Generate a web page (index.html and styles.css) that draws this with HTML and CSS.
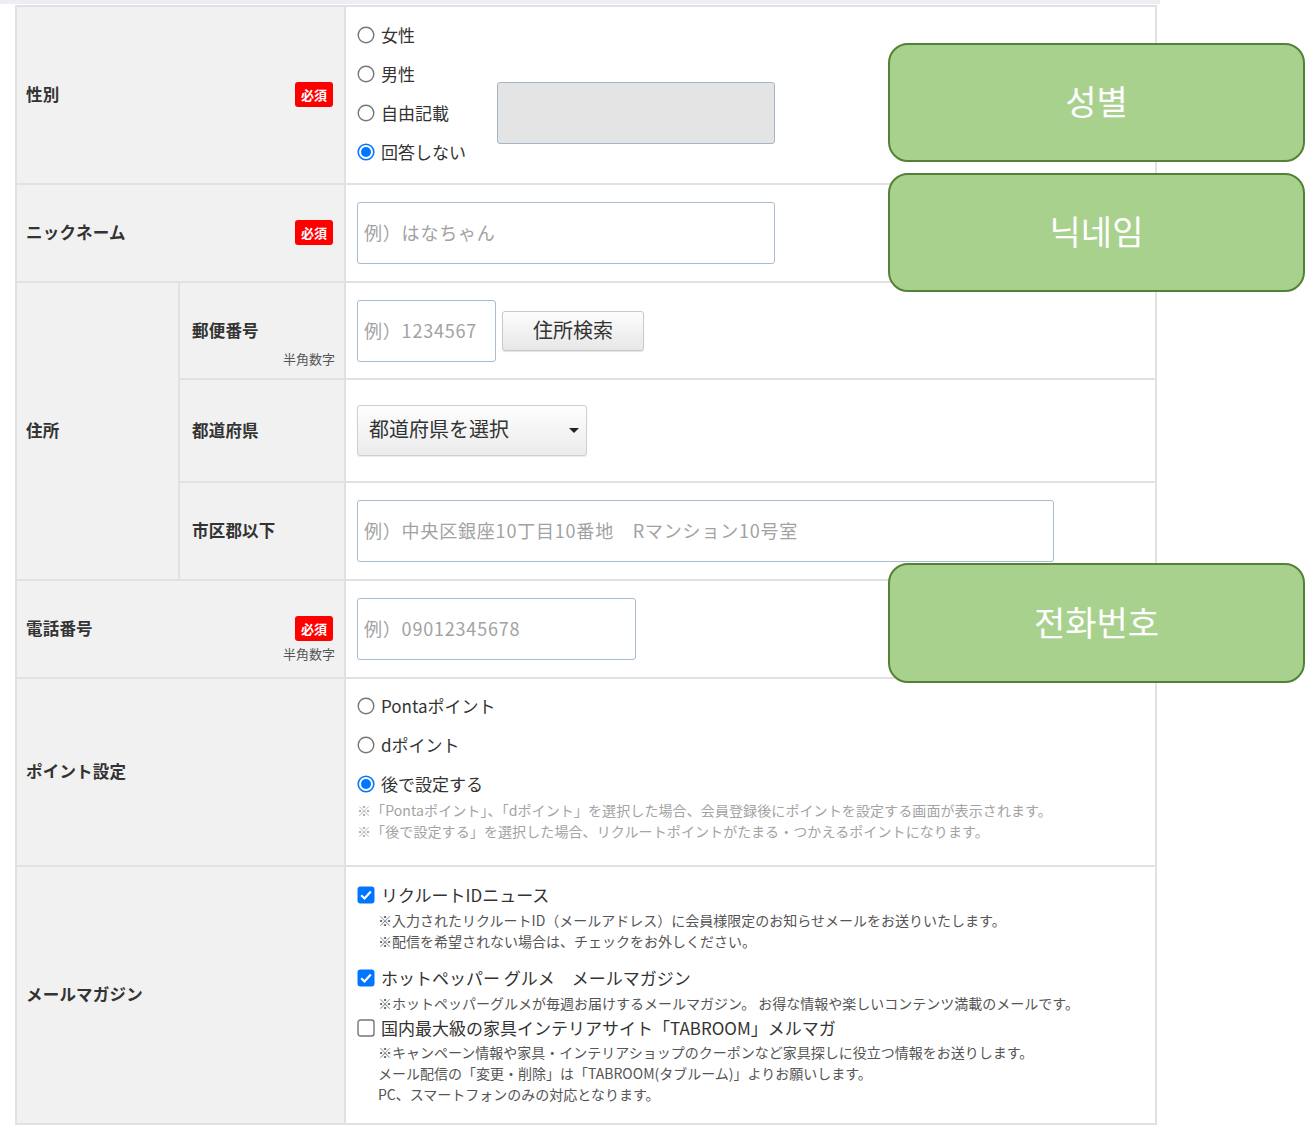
FILE: index.html
```html
<!DOCTYPE html>
<html lang="ja">
<head>
<meta charset="utf-8">
<title>会員登録</title>
<link rel="stylesheet" href="styles.css">
</head>
<body>
<div class="page">
  <div class="topbar"></div>
  <div class="form">
    <!-- 性別 -->
    <div class="cell lbl span2">
      <span class="lbl-text">性別</span><span class="badge">必須</span>
    </div>
    <div class="cell val val-gender">
      <div class="radios">
        <label class="opt"><svg class="ico" viewBox="0 0 18 18" width="18" height="18"><circle cx="9" cy="9" r="7.8" fill="#fff" stroke="#767676" stroke-width="1.4"/></svg><span>女性</span></label>
        <label class="opt"><svg class="ico" viewBox="0 0 18 18" width="18" height="18"><circle cx="9" cy="9" r="7.8" fill="#fff" stroke="#767676" stroke-width="1.4"/></svg><span>男性</span></label>
        <label class="opt"><svg class="ico" viewBox="0 0 18 18" width="18" height="18"><circle cx="9" cy="9" r="7.8" fill="#fff" stroke="#767676" stroke-width="1.4"/></svg><span>自由記載</span></label>
        <label class="opt"><svg class="ico" viewBox="0 0 18 18" width="18" height="18"><circle cx="9" cy="9" r="7.8" fill="#fff" stroke="#0075ff" stroke-width="1.6"/><circle cx="9" cy="9" r="5" fill="#0075ff"/></svg><span>回答しない</span></label>
      </div>
      <input class="txt free" type="text" disabled>
    </div>

    <!-- ニックネーム -->
    <div class="cell lbl span2">
      <span class="lbl-text">ニックネーム</span><span class="badge">必須</span>
    </div>
    <div class="cell val">
      <input class="txt w-nick" type="text" placeholder="例）はなちゃん">
    </div>

    <!-- 住所 -->
    <div class="cell lbl rowspan3">
      <span class="lbl-text">住所</span>
    </div>
    <div class="cell lbl sub">
      <span class="lbl-text">郵便番号</span><span class="hint hint-zip">半角数字</span>
    </div>
    <div class="cell val">
      <input class="txt w-zip" type="text" placeholder="例）1234567">
      <button class="btn" type="button">住所検索</button>
    </div>
    <div class="cell lbl sub">
      <span class="lbl-text">都道府県</span>
    </div>
    <div class="cell val">
      <div class="sel"><span>都道府県を選択</span><span class="caret"></span></div>
    </div>
    <div class="cell lbl sub">
      <span class="lbl-text">市区郡以下</span>
    </div>
    <div class="cell val">
      <input class="txt w-addr" type="text" placeholder="例）中央区銀座10丁目10番地　Rマンション10号室">
    </div>

    <!-- 電話番号 -->
    <div class="cell lbl span2">
      <span class="lbl-text">電話番号</span><span class="badge">必須</span><span class="hint hint-tel">半角数字</span>
    </div>
    <div class="cell val">
      <input class="txt w-tel" type="text" placeholder="例）09012345678">
    </div>

    <!-- ポイント設定 -->
    <div class="cell lbl span2">
      <span class="lbl-text">ポイント設定</span>
    </div>
    <div class="cell val val-col val-point">
      <div class="radios">
        <label class="opt"><svg class="ico" viewBox="0 0 18 18" width="18" height="18"><circle cx="9" cy="9" r="7.8" fill="#fff" stroke="#767676" stroke-width="1.4"/></svg><span>Pontaポイント</span></label>
        <label class="opt"><svg class="ico" viewBox="0 0 18 18" width="18" height="18"><circle cx="9" cy="9" r="7.8" fill="#fff" stroke="#767676" stroke-width="1.4"/></svg><span>dポイント</span></label>
        <label class="opt"><svg class="ico" viewBox="0 0 18 18" width="18" height="18"><circle cx="9" cy="9" r="7.8" fill="#fff" stroke="#0075ff" stroke-width="1.6"/><circle cx="9" cy="9" r="5" fill="#0075ff"/></svg><span>後で設定する</span></label>
      </div>
      <div class="pnotes">
        <p>※「Pontaポイント」、「dポイント」を選択した場合、会員登録後にポイントを設定する画面が表示されます。</p>
        <p>※「後で設定する」を選択した場合、リクルートポイントがたまる・つかえるポイントになります。</p>
      </div>
    </div>

    <!-- メールマガジン -->
    <div class="cell lbl span2">
      <span class="lbl-text">メールマガジン</span>
    </div>
    <div class="cell val val-col val-mail">
      <div class="mitem m1">
        <label class="opt"><svg class="ico" viewBox="0 0 18 18" width="18" height="18"><rect x="0.5" y="0.5" width="17" height="17" rx="3" fill="#0075ff"/><path d="M4.2 9.2 L7.5 12.5 L13.8 5.4" fill="none" stroke="#fff" stroke-width="2.2"/></svg><span>リクルートIDニュース</span></label>
        <div class="mnotes">
          <p>※入力されたリクルートID（メールアドレス）に会員様限定のお知らせメールをお送りいたします。</p>
          <p>※配信を希望されない場合は、チェックをお外しください。</p>
        </div>
      </div>
      <div class="mitem m2">
        <label class="opt"><svg class="ico" viewBox="0 0 18 18" width="18" height="18"><rect x="0.5" y="0.5" width="17" height="17" rx="3" fill="#0075ff"/><path d="M4.2 9.2 L7.5 12.5 L13.8 5.4" fill="none" stroke="#fff" stroke-width="2.2"/></svg><span>ホットペッパー グルメ　メールマガジン</span></label>
        <div class="mnotes">
          <p>※ホットペッパーグルメが毎週お届けするメールマガジン。 お得な情報や楽しいコンテンツ満載のメールです。</p>
        </div>
      </div>
      <div class="mitem m3">
        <label class="opt"><svg class="ico" viewBox="0 0 18 18" width="18" height="18"><rect x="1" y="1" width="16" height="16" rx="2.5" fill="#fff" stroke="#767676" stroke-width="1.4"/></svg><span>国内最大級の家具インテリアサイト「TABROOM」メルマガ</span></label>
        <div class="mnotes">
          <p>※キャンペーン情報や家具・インテリアショップのクーポンなど家具探しに役立つ情報をお送りします。</p>
          <p>メール配信の「変更・削除」は「TABROOM(タブルーム)」よりお願いします。</p>
          <p>PC、スマートフォンのみの対応となります。</p>
        </div>
      </div>
    </div>
  </div>

  <div class="tag tag-gender">성별</div>
  <div class="tag tag-nick">닉네임</div>
  <div class="tag tag-tel">전화번호</div>
</div>
</body>
</html>
```

FILE: styles.css
```css
* { box-sizing: border-box; }
body {
  margin: 0;
  background: #fff;
  color: #333;
  font-family: "Noto Sans CJK JP", "Noto Sans", sans-serif;
}
p { margin: 0; }

.page {
  position: relative;
  width: 1305px;
  height: 1127px;
  overflow: hidden;
}
.topbar {
  width: 1160px;
  height: 4px;
  background: #eceef4;
  margin-bottom: 1px;
}

.form {
  display: grid;
  grid-template-columns: 163px 166px 811px;
  grid-template-rows: 178px 98px 97px 103px 98px 98px 188px 258px;
  width: 1142px;
  margin-left: 15px;
  border-left: 2px solid #e1e1e1;
  border-top: 2px solid #e1e1e1;
}
.cell {
  border-right: 2px solid #e1e1e1;
  border-bottom: 2px solid #e1e1e1;
}

/* label cells */
.lbl {
  background: #f1f1f1;
  display: grid;
  grid-template-columns: 1fr auto;
  grid-template-rows: 1fr auto 1fr;
  padding: 0 11px 2px 9px;
}
.span2 { grid-column: 1 / 3; }
.rowspan3 { grid-row: span 3; }
.sub { padding: 0 9px 2px 12px; }

.lbl-text {
  grid-row: 2;
  grid-column: 1;
  align-self: center;
  font-size: 16.5px;
  font-weight: 700;
  line-height: 22px;
  color: #333;
  letter-spacing: 0.2px;
}
.badge {
  grid-row: 2;
  grid-column: 2;
  justify-self: end;
  align-self: center;
  width: 38px;
  height: 25px;
  line-height: 25px;
  text-align: center;
  background: #ff0000;
  color: #fff;
  font-size: 13px;
  font-weight: 700;
  border-radius: 3px;
  margin-top: 1px;
}
.hint {
  grid-row: 3;
  grid-column: 2;
  justify-self: end;
  align-self: start;
  font-size: 13px;
  line-height: 18px;
  color: #555;
}
.hint-zip { margin-top: 9px; }
.hint-tel { margin-top: 4px; margin-right: -2px; }

/* value cells */
.val {
  background: #fff;
  display: flex;
  align-items: center;
  padding: 0 11px;
}
.val-col {
  flex-direction: column;
  align-items: flex-start;
  justify-content: flex-start;
}
.val-gender {
  align-items: flex-start;
  padding-top: 17px;
}

.radios {
  display: flex;
  flex-direction: column;
  gap: 17px;
}
.val-gender .radios { width: 128px; }

.opt {
  display: flex;
  align-items: center;
  gap: 6px;
  height: 22px;
  font-size: 17px;
  line-height: 22px;
  color: #333;
  white-space: nowrap;
}
.ico { flex: none; display: block; }

.txt {
  height: 62px;
  border: 1px solid #a9bccf;
  border-radius: 3px;
  padding: 0 6px 2px;
  font-family: inherit;
  font-size: 18px;
  letter-spacing: 0.8px;
  color: #333;
  background: #fff;
  outline: none;
}
.txt::placeholder { color: #a2a2a2; }
.free {
  width: 278px;
  margin-top: 58px;
  margin-left: 12px;
  background: #e4e4e4;
  border-color: #a4b5c6;
}
.w-nick { width: 418px; }
.w-zip { width: 139px; }
.w-addr { width: 697px; }
.w-tel { width: 279px; }

.btn {
  width: 142px;
  height: 40px;
  margin-left: 6px;
  border: 1px solid #c9c9c9;
  border-radius: 3px;
  background: linear-gradient(#fdfdfd, #e7e7e7);
  box-shadow: 0 1px 1px rgba(0, 0, 0, 0.12);
  font-family: inherit;
  font-size: 20px;
  color: #333;
  padding: 0 0 2px;
}

.sel {
  width: 230px;
  height: 51px;
  border: 1px solid #cfcfcf;
  border-radius: 3px;
  background: linear-gradient(#fefefe, #ebebeb);
  box-shadow: 0 1px 1px rgba(0, 0, 0, 0.08);
  display: flex;
  align-items: center;
  justify-content: space-between;
  padding: 0 7px 4px 11px;
  font-size: 20px;
  color: #333;
}
.caret {
  width: 0;
  height: 0;
  margin-top: 4px;
  border-left: 5px solid transparent;
  border-right: 5px solid transparent;
  border-top: 5px solid #222;
}

.val-point { padding-top: 16px; }
.pnotes {
  margin-top: 5px;
  font-size: 14px;
  line-height: 21px;
  color: #a3a3a3;
  white-space: nowrap;
  letter-spacing: 0.1px;
}

.val-mail { padding-top: 17px; }
.mnotes {
  margin-top: 4px;
  padding-left: 21px;
  font-size: 14px;
  line-height: 21px;
  color: #555;
  white-space: nowrap;
}
.m1 { margin-bottom: 15px; }
.m2 { margin-bottom: 2.5px; }
.m3 .mnotes { margin-top: 3px; }

/* annotation tags over the form */
.tag {
  position: absolute;
  left: 888px;
  width: 417px;
  height: 119px;
  border: 2px solid #538135;
  border-radius: 20px;
  background: #a9d18e;
  color: #fff;
  font-family: "Noto Sans CJK KR", "Noto Sans", sans-serif;
  font-size: 34px;
  display: flex;
  align-items: center;
  justify-content: center;
  padding-bottom: 4px;
}
.tag-gender { top: 43px; }
.tag-nick { top: 173px; }
.tag-tel { top: 563px; height: 120px; }
```
